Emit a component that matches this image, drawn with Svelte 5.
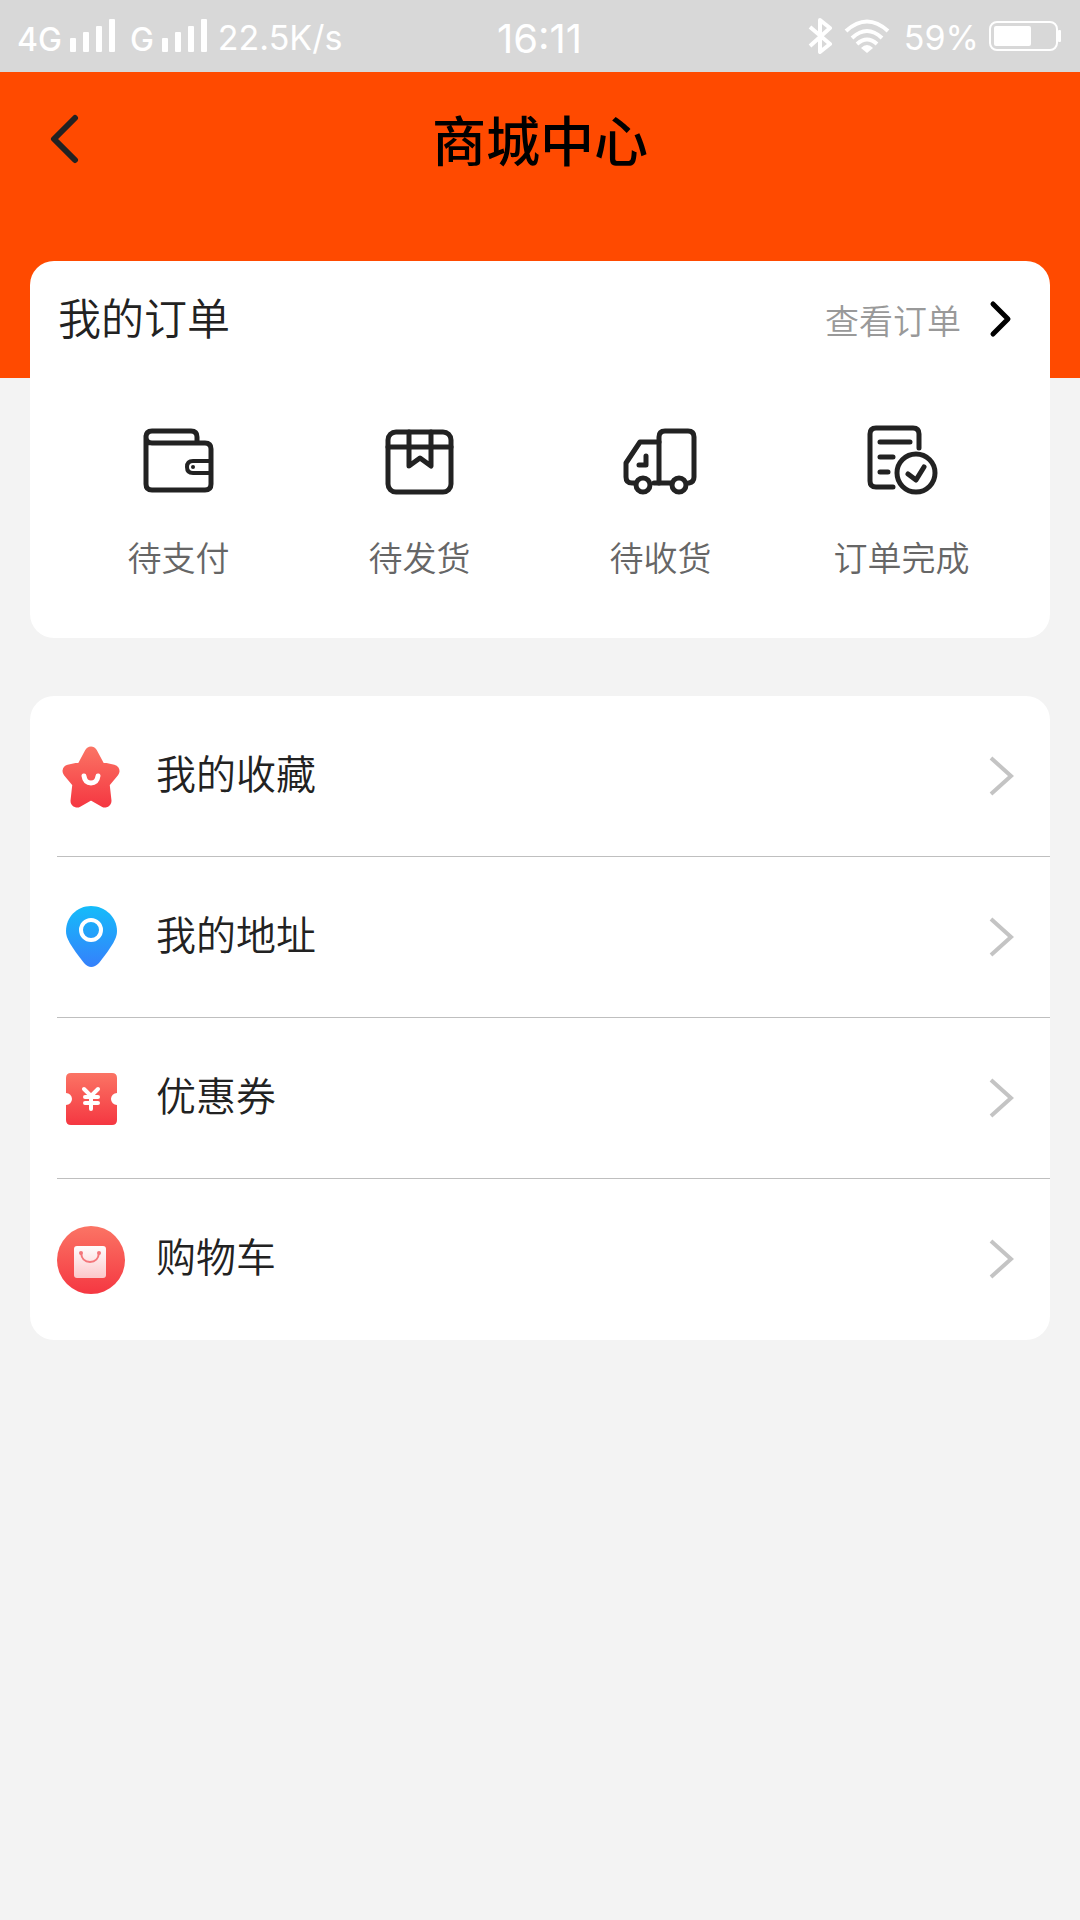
<script>
    const orderTabs = [
        { icon: "wallet", label: "待支付" },
        { icon: "box", label: "待发货" },
        { icon: "truck", label: "待收货" },
        { icon: "done", label: "订单完成" },
    ];

    const menu = [
        { icon: "star", label: "我的收藏" },
        { icon: "pin", label: "我的地址" },
        { icon: "coupon", label: "优惠券" },
        { icon: "cart", label: "购物车" },
    ];
</script>

{#snippet signal()}
    <svg class="signal" width="46" height="34" viewBox="0 0 46 34" fill="#fff">
        <rect x="0" y="19" width="6" height="14" rx="1" />
        <rect x="13" y="13" width="6" height="20" rx="1" />
        <rect x="26" y="7" width="6" height="26" rx="1" />
        <rect x="39" y="0" width="6" height="33" rx="1" />
    </svg>
{/snippet}

<div class="status-bar">
    <div class="status-left">
        <span class="net">4G</span>
        {@render signal()}
        <span class="net second">G</span>
        {@render signal()}
        <span class="speed">22.5K/s</span>
    </div>
    <span class="time">16:11</span>
    <div class="status-right">
        <svg width="26" height="36" viewBox="0 0 26 36" fill="none" stroke="#fff" stroke-width="4" stroke-linejoin="round">
            <path d="M2 9 L22 26 L12 34 V2 L22 10 L2 28" />
        </svg>
        <svg class="wifi" width="46" height="34" viewBox="0 0 46 34" fill="none" stroke="#fff" stroke-width="4">
            <path d="M2 12 Q23 -7 44 12" />
            <path d="M8 19 Q23 5 38 19" />
            <path d="M13 25 Q23 16 33 25" />
            <path d="M17 29 Q23 23 29 29 L23 34 Z" fill="#fff" stroke="none" />
        </svg>
        <span class="percent">59%</span>
        <svg class="battery" width="73" height="32" viewBox="0 0 73 32">
            <rect x="1" y="2" width="67" height="28" rx="7" fill="none" stroke="#fff" stroke-width="2" />
            <rect x="5" y="6" width="37" height="20" rx="2" fill="#fff" />
            <rect x="69" y="10" width="3" height="12" rx="1" fill="#fff" />
        </svg>
    </div>
</div>

<header class="hero">
    <nav class="nav">
        <button class="back" aria-label="返回">
            <svg width="30" height="52" viewBox="0 0 30 52" fill="none" stroke="#222" stroke-width="6" stroke-linecap="round" stroke-linejoin="round">
                <path d="M25 4 L4 25 L25 46" />
            </svg>
        </button>
        <h1>商城中心</h1>
    </nav>
</header>

<main>
    <section class="card orders">
        <div class="orders-head">
            <h2>我的订单</h2>
            <a href="#orders">
                <span>查看订单</span>
                <svg width="24" height="38" viewBox="0 0 24 38" fill="none" stroke="#000" stroke-width="5" stroke-linecap="round" stroke-linejoin="round">
                    <path d="M4 4 L19 19 L4 34" />
                </svg>
            </a>
        </div>
        <div class="order-tabs">
            {#each orderTabs as tab (tab.icon)}
                <button class="order-tab">
                    <svg width="80" height="80" viewBox="0 0 80 80" fill="none" stroke="#222" stroke-width="5" stroke-linecap="round" stroke-linejoin="round">
                        {#if tab.icon === "wallet"}
                            <path d="M7 16 V64 Q7 70 13 70 H66 Q72 70 72 64 V29 Q72 23 66 23 H13 Q7 23 7 17 Q7 11 13 11 H52 Q58 11 58 17 V23" />
                            <path d="M72 41 H54 Q48 41 48 47 Q48 53 54 53 H72" stroke-width="4" />
                            <circle cx="54" cy="47" r="2" fill="#222" stroke="none" />
                        {:else if tab.icon === "box"}
                            <rect x="8" y="12" width="63" height="60" rx="8" />
                            <path d="M8 27 H30 M51 27 H71" />
                            <path d="M30 27 H51" />
                            <path d="M29 12 V46 L40 38 L51 46 V12" />
                        {:else if tab.icon === "truck"}
                            <path d="M13 63 H11 Q5 63 5 57 V43 L19 22 H38" />
                            <path d="M38 63 V17 Q38 11 44 11 H67 Q73 11 73 17 V57 Q73 62 68 63" />
                            <path d="M33 63 H51" />
                            <path d="M25 36 V45 H18" />
                            <circle cx="22" cy="65" r="7" />
                            <circle cx="58" cy="65" r="7" />
                        {:else}
                            <path d="M57 28 V14 Q57 8 51 8 H14 Q8 8 8 14 V61 Q8 67 14 67 H31" />
                            <path d="M18 22 H48 M18 37 H31 M18 52 H26" />
                            <circle cx="54" cy="53" r="19" />
                            <path d="M46 54 L54 60 L62 47" />
                        {/if}
                    </svg>
                    <span>{tab.label}</span>
                </button>
            {/each}
        </div>
    </section>

    <section class="card menu">
        {#each menu as item (item.icon)}
            <a class="menu-item" href="#{item.icon}">
                <svg width="70" height="72" viewBox="0 0 70 72" fill="none">
                    {#if item.icon === "star"}
                        <linearGradient id="starFill" gradientUnits="userSpaceOnUse" x1="0" y1="6" x2="0" y2="66">
                            <stop offset="0" stop-color="#fb7565" />
                            <stop offset="1" stop-color="#f53842" />
                        </linearGradient>
                        <path d="M34 13 L42 28 L56 31 L46 43 L48 61 L34 53 L20 61 L22 43 L12 31 L26 28 Z" fill="url(#starFill)" stroke="url(#starFill)" stroke-width="13" stroke-linejoin="round" />
                        <path d="M27 36 Q28 43 34 43 Q40 43 41 36" stroke="#fff" stroke-width="5" stroke-linecap="round" />
                    {:else if item.icon === "pin"}
                        <linearGradient id="pinFill" gradientUnits="userSpaceOnUse" x1="0" y1="4" x2="0" y2="66">
                            <stop offset="0" stop-color="#14bdfa" />
                            <stop offset="1" stop-color="#3580fb" />
                        </linearGradient>
                        <path d="M34 5 C48 5 60 16 60 30 C60 37 56 44 42 62 Q34 70 27 62 C13 44 9 37 9 30 C9 16 20 5 34 5 Z" fill="url(#pinFill)" />
                        <circle cx="34" cy="29" r="10" stroke="#fff" stroke-width="4" />
                    {:else if item.icon === "coupon"}
                        <linearGradient id="couponFill" gradientUnits="userSpaceOnUse" x1="0" y1="10" x2="0" y2="62">
                            <stop offset="0" stop-color="#fb7565" />
                            <stop offset="1" stop-color="#f53842" />
                        </linearGradient>
                        <path d="M14 11 H55 Q60 11 60 16 V31 A6 6 0 0 0 60 43 V58 Q60 63 55 63 H14 Q9 63 9 58 V43 A6 6 0 0 0 9 31 V16 Q9 11 14 11 Z" fill="url(#couponFill)" />
                        <path d="M27 27 L34 34 L41 27 M34 34 V47 M28 35 H41 M28 41 H41" stroke="#fff" stroke-width="4" stroke-linecap="round" />
                    {:else}
                        <linearGradient id="cartFill" gradientUnits="userSpaceOnUse" x1="0" y1="2" x2="0" y2="70">
                            <stop offset="0" stop-color="#fb7565" />
                            <stop offset="1" stop-color="#f53842" />
                        </linearGradient>
                        <linearGradient id="bagFill" gradientUnits="userSpaceOnUse" x1="0" y1="22" x2="0" y2="54">
                            <stop offset="0" stop-color="#fff" />
                            <stop offset="1" stop-color="#fcc9cc" />
                        </linearGradient>
                        <circle cx="34" cy="37" r="34" fill="url(#cartFill)" />
                        <rect x="17" y="23" width="32" height="32" rx="3" fill="url(#bagFill)" />
                        <path d="M24 30 Q25 39 33 39 Q41 39 42 30" stroke="#f4777b" stroke-width="2" />
                        <circle cx="24" cy="30" r="2" fill="#f4777b" />
                        <circle cx="42" cy="30" r="2" fill="#f4777b" />
                    {/if}
                </svg>
                <span>{item.label}</span>
                <svg class="arrow" width="26" height="42" viewBox="0 0 26 42" fill="none" stroke="#c4c4c4" stroke-width="4">
                    <path d="M2 3 L22 21 L2 39" />
                </svg>
            </a>
        {/each}
    </section>
</main>

<style>
    :global(body) {
        background: #f3f3f3;
        font-family: "Noto Sans CJK SC", sans-serif;
        font-weight: 350;
        color: #222;
    }

    svg {
        display: block;
        flex-shrink: 0;
    }

    button {
        padding: 0;
        border: none;
        background: none;
        font: inherit;
        color: inherit;
        cursor: pointer;
    }

    a {
        color: inherit;
        text-decoration: none;
    }

    /* Status bar */
    .status-bar {
        display: grid;
        grid-template-columns: 1fr auto 1fr;
        align-items: center;
        height: 72px;
        padding: 0 18px 0 17px;
        background: #d8d8d8;
        color: #fff;
        font-family: Inter, sans-serif;
        font-weight: 400;
        font-size: 34px;
    }

    .status-left,
    .status-right {
        display: flex;
        align-items: center;
    }

    .status-right {
        justify-content: flex-end;
    }

    .net {
        padding-top: 6px;
        font-size: 32px;
        font-weight: 500;
    }

    .net.second {
        margin-left: 14px;
    }

    .signal {
        margin-left: 8px;
    }

    .speed {
        margin-left: 10px;
        padding-top: 2px;
    }

    .time {
        padding-top: 4px;
        font-size: 40px;
    }

    .wifi {
        margin-left: 10px;
    }

    .percent {
        margin-left: 14px;
        padding-top: 2px;
    }

    .battery {
        margin-left: 10px;
    }

    /* Header */
    .hero {
        padding-bottom: 170px;
        background: #ff4a00;
    }

    .nav {
        display: grid;
        grid-template-columns: 1fr auto 1fr;
        align-items: center;
        height: 136px;
        padding: 0 50px;
    }

    .back {
        justify-self: start;
    }

    h1 {
        margin: 0;
        padding-bottom: 2px;
        font-size: 54px;
        font-weight: 500;
        line-height: 64px;
        color: #000;
    }

    /* Cards */
    main {
        display: flex;
        flex-direction: column;
        gap: 58px;
        margin-top: -117px;
        padding: 0 30px;
    }

    .card {
        border-radius: 24px;
        background: #fff;
    }

    .orders {
        padding: 0 28px 56px;
    }

    .orders-head {
        display: flex;
        align-items: center;
        justify-content: space-between;
        height: 116px;
        padding-right: 9px;
    }

    h2 {
        margin: 0;
        padding-bottom: 6px;
        font-size: 43px;
        font-weight: inherit;
        line-height: 64px;
    }

    .orders-head a {
        display: flex;
        align-items: center;
        gap: 28px;
        font-size: 34px;
        color: #999;
    }

    .order-tabs {
        display: grid;
        grid-template-columns: repeat(4, 1fr);
        padding-top: 43px;
    }

    .order-tab {
        display: flex;
        flex-direction: column;
        align-items: center;
        gap: 32px;
        font-size: 34px;
        line-height: 50px;
        color: #666;
    }

    .menu {
        padding-left: 27px;
    }

    .menu-item {
        display: flex;
        align-items: center;
        gap: 29px;
        height: 160px;
        padding-right: 35px;
        border-bottom: 1px solid #bfbfbf;
        font-size: 40px;
    }

    .menu-item:last-child {
        border-bottom-color: transparent;
    }

    .menu-item span {
        padding-bottom: 8px;
    }

    .arrow {
        margin-left: auto;
    }
</style>
